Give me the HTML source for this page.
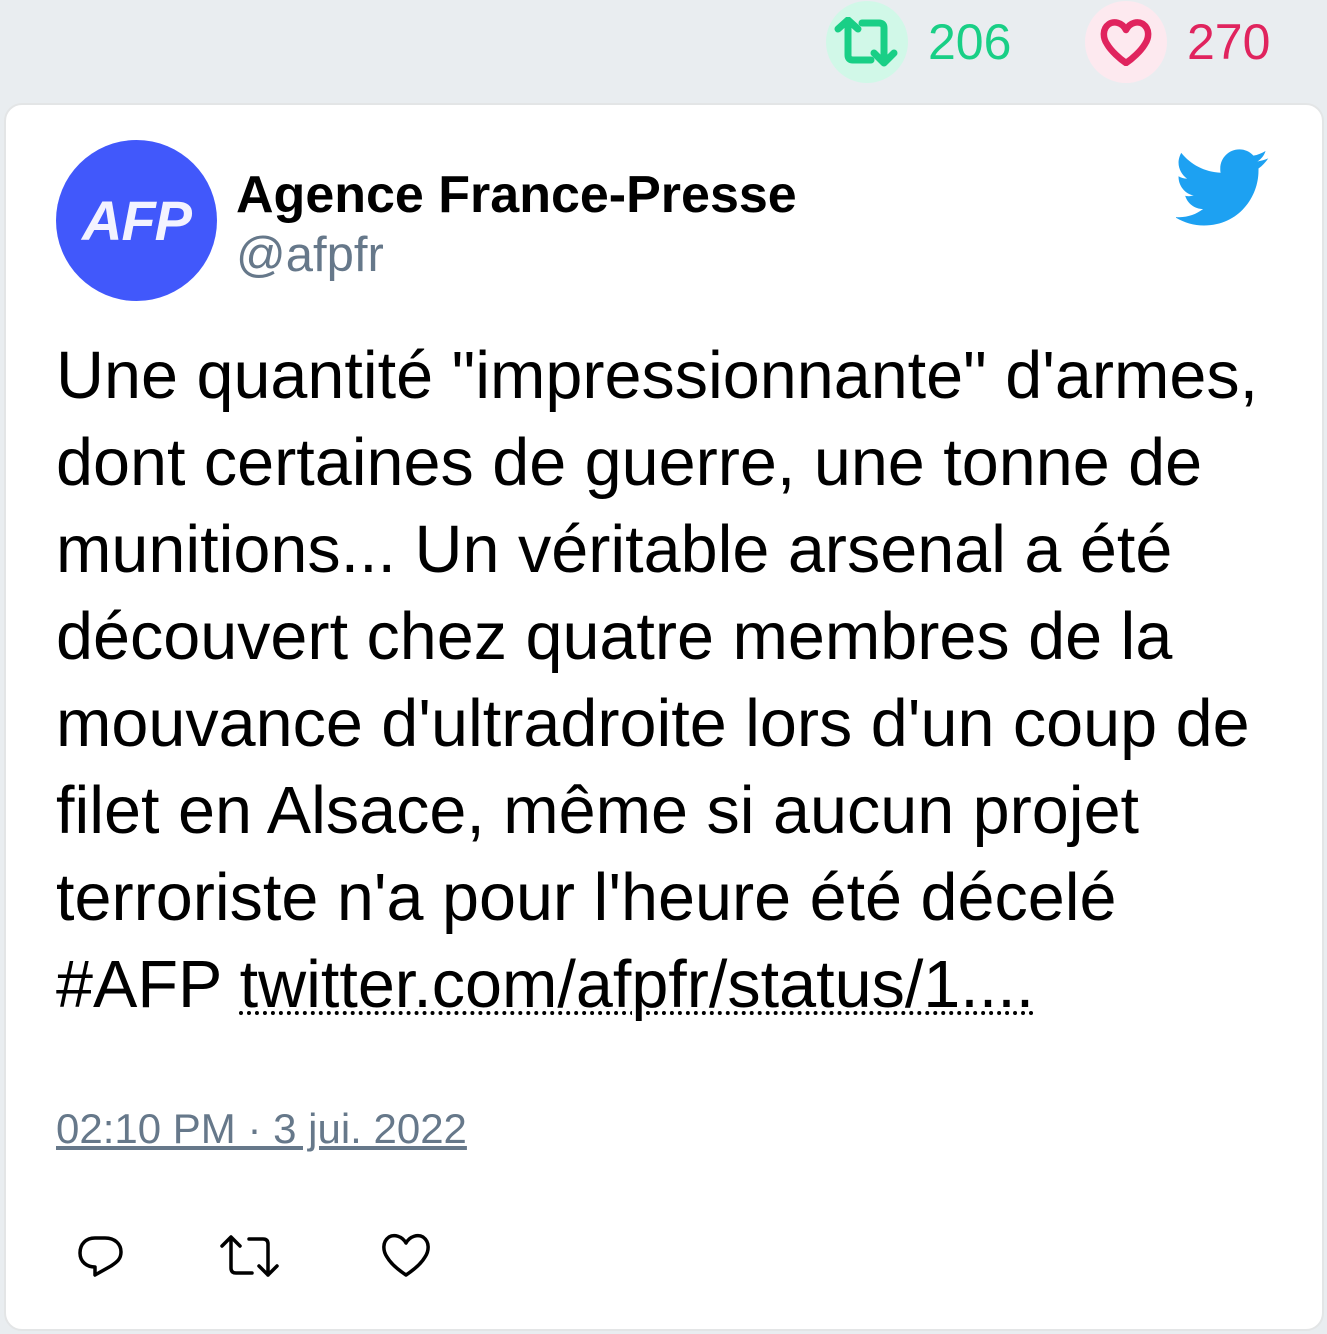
<!DOCTYPE html>
<html><head><meta charset="utf-8">
<style>
*{margin:0;padding:0;box-sizing:border-box}
html,body{width:1327px;height:1334px;background:#e9edf0;font-family:"Liberation Sans",sans-serif;overflow:hidden;position:relative}
.stat{position:absolute;top:0;height:84px;display:flex;align-items:center}
.circ{width:82px;height:82px;border-radius:50%;display:flex;align-items:center;justify-content:center}
.card{position:absolute;left:4px;top:103px;width:1320px;height:1228px;background:#fff;border:2px solid #e3e5e6;border-radius:18px}
.av{position:absolute;left:50px;top:35px;width:161px;height:161px;border-radius:50%;background:#4158fb;color:#f3f3ff;font-weight:bold;font-style:italic;font-size:56px;display:flex;align-items:center;justify-content:center;letter-spacing:-1px}
.name{position:absolute;left:230px;top:60px;font-size:52px;font-weight:bold;color:#000}
.handle{position:absolute;left:230px;top:122px;font-size:49px;color:#66788a}
.txt{position:absolute;left:50px;top:228px;width:1230px;font-size:66.5px;line-height:87px;color:#000}
.txt a{color:#000;text-decoration:underline dotted;text-underline-offset:4px;text-decoration-thickness:4px}
.time{position:absolute;left:50px;top:1000px;font-size:42px;color:#66788a;text-decoration:underline}
</style></head><body>
<div class="stat" style="left:826px">
 <div class="circ" style="background:#d1f8e8"><svg width="66" height="50" viewBox="0 0 66 50" fill="none" stroke="#19cf86" stroke-width="7" stroke-linecap="round" stroke-linejoin="round"><path d="M4 12 L14 3 L24 12 M14 4 V38 Q14 43 19 43 H37"/><path d="M28 6 H45 Q50 6 50 11 V45 M40 36 L50 46 L60 36"/></svg></div>
 <span style="font-size:50px;color:#19cf86;margin-left:20px">206</span>
</div>
<div class="stat" style="left:1085px">
 <div class="circ" style="background:#fde9ef"><svg width="52" height="48" viewBox="0 0 52 48" fill="none" stroke="#e0245e" stroke-width="6.5" stroke-linejoin="round"><path d="M26 12 C22 4 14 3 9 6 C2 11 3 20 7 26 C11 33 20 41 26 45 C32 41 41 33 45 26 C49 20 50 11 43 6 C38 3 30 4 26 12 Z"/></svg></div>
 <span style="font-size:50px;color:#e0245e;margin-left:20px">270</span>
</div>
<div class="card">
 <div class="av">AFP</div>
 <div class="name">Agence France-Presse</div>
 <div class="handle">@afpfr</div>
 <svg style="position:absolute;left:1170px;top:44px" width="94" height="78" viewBox="0 0 24 20"><path fill="#1da1f2" d="M23.6 2.4c-.9.4-1.8.6-2.8.8 1-.6 1.8-1.6 2.1-2.7-1 .6-2 1-3.1 1.2C18.9.7 17.6.1 16.2.1c-2.7 0-4.9 2.2-4.9 4.9 0 .4 0 .8.1 1.1C7.3 5.9 3.7 4 1.3 1 .9 1.7.6 2.6.6 3.5c0 1.7.9 3.2 2.2 4.1-.8 0-1.6-.2-2.2-.6v.1c0 2.4 1.7 4.4 3.9 4.8-.4.1-.8.2-1.3.2-.3 0-.6 0-.9-.1.6 2 2.4 3.4 4.6 3.4-1.7 1.3-3.8 2.1-6.1 2.1-.4 0-.8 0-1.2-.1 2.2 1.4 4.8 2.2 7.5 2.2 9.1 0 14-7.5 14-14v-.6c1-.7 1.8-1.6 2.5-2.6z"/></svg>
 <div class="txt">Une quantité "impressionnante" d'armes, dont certaines de guerre, une tonne de munitions... Un véritable arsenal a été découvert chez quatre membres de la mouvance d'ultradroite lors d'un coup de filet en Alsace, même si aucun projet terroriste n'a pour l'heure été décelé #AFP <a>twitter.com/afpfr/status/1....</a></div>
 <div class="time">02:10 PM · 3 jui. 2022</div>
 <svg style="position:absolute;left:69px;top:1127px" width="50" height="50" viewBox="0 0 50 50" fill="none" stroke="#000" stroke-width="3.5" stroke-linejoin="round"><path d="M20 6 H30 C40 6 46 12 46 20 C46 27 42 30 36 34 L20 43 V35 C12 35 5 30 5 21 C5 12 11 6 20 6 Z"/></svg>
 <svg style="position:absolute;left:213px;top:1129px" width="62" height="46" viewBox="0 0 62 46" fill="none" stroke="#000" stroke-width="3.5" stroke-linecap="round" stroke-linejoin="round"><path d="M3 12 L12 3 L21 12 M12 4 V34 Q12 39 17 39 H33"/><path d="M30 5 H44 Q49 5 49 10 V41 M40 32 L49 41 L58 32"/></svg>
 <svg style="position:absolute;left:374px;top:1127px" width="52" height="48" viewBox="0 0 52 48" fill="none" stroke="#000" stroke-width="3.5" stroke-linejoin="round"><path d="M26 11 C22 4 14 2 9 5 C2 10 3 19 7 25 C11 32 20 39 26 43 C32 39 41 32 45 25 C49 19 50 10 43 5 C38 2 30 4 26 11 Z"/></svg>
</div>
</body></html>
